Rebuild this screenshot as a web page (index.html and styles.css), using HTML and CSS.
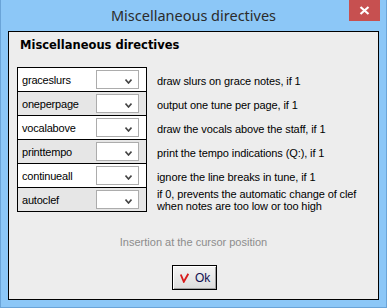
FILE: index.html
```html
<!DOCTYPE html>
<html>
<head>
<meta charset="utf-8">
<link rel="stylesheet" href="styles.css">
</head>
<body>
<div class="window">
  <div class="titlebar">
    <div class="title">Miscellaneous directives</div>
    <div class="close">
      <svg width="11" height="9" viewBox="0 0 11 9"><path d="M1.5 1 L9.5 8 M9.5 1 L1.5 8" stroke="#fff" stroke-width="2.2" fill="none"/></svg>
    </div>
  </div>
  <div class="client">
    <div class="heading">Miscellaneous directives</div>
    <div class="options">
      <div class="row">
        <div class="opt white"><span class="label">graceslurs</span><span class="combo"><svg width="7" height="5" viewBox="0 0 7 5"><path d="M0.5 0.5 L3.5 4 L6.5 0.5" stroke="#444" stroke-width="1.6" fill="none"/></svg></span></div>
        <div class="desc">draw slurs on grace notes, if 1</div>
      </div>
      <div class="row">
        <div class="opt grey"><span class="label">oneperpage</span><span class="combo"><svg width="7" height="5" viewBox="0 0 7 5"><path d="M0.5 0.5 L3.5 4 L6.5 0.5" stroke="#444" stroke-width="1.6" fill="none"/></svg></span></div>
        <div class="desc">output one tune per page, if 1</div>
      </div>
      <div class="row">
        <div class="opt white"><span class="label">vocalabove</span><span class="combo"><svg width="7" height="5" viewBox="0 0 7 5"><path d="M0.5 0.5 L3.5 4 L6.5 0.5" stroke="#444" stroke-width="1.6" fill="none"/></svg></span></div>
        <div class="desc">draw the vocals above the staff, if 1</div>
      </div>
      <div class="row">
        <div class="opt grey"><span class="label">printtempo</span><span class="combo"><svg width="7" height="5" viewBox="0 0 7 5"><path d="M0.5 0.5 L3.5 4 L6.5 0.5" stroke="#444" stroke-width="1.6" fill="none"/></svg></span></div>
        <div class="desc">print the tempo indications (Q:), if 1</div>
      </div>
      <div class="row">
        <div class="opt white"><span class="label">continueall</span><span class="combo"><svg width="7" height="5" viewBox="0 0 7 5"><path d="M0.5 0.5 L3.5 4 L6.5 0.5" stroke="#444" stroke-width="1.6" fill="none"/></svg></span></div>
        <div class="desc">ignore the line breaks in tune, if 1</div>
      </div>
      <div class="row last">
        <div class="opt grey"><span class="label">autoclef</span><span class="combo"><svg width="7" height="5" viewBox="0 0 7 5"><path d="M0.5 0.5 L3.5 4 L6.5 0.5" stroke="#444" stroke-width="1.6" fill="none"/></svg></span></div>
        <div class="desc two">if 0, prevents the automatic change of clef<br>when notes are too low or too high</div>
      </div>
    </div>
    <div class="hint">Insertion at the cursor position</div>
    <div class="actions">
      <button class="ok"><svg width="9" height="10" viewBox="0 0 9 10"><path d="M0.8 1.5 L3.8 8.8 L8.3 0.8" stroke="#d81c1c" stroke-width="1.8" fill="none"/></svg><span>Ok</span></button>
    </div>
  </div>
</div>
</body>
</html>
```

FILE: styles.css
```css
* { box-sizing: border-box; }
html, body { margin: 0; padding: 0; }
body { background: #8cc6f6; }

.window {
  width: 387px;
  height: 308px;
  background: #8cc7f7;
  border: 1px solid #6aa4d8;
  border-top: 0;
  display: flex;
  flex-direction: column;
}

.titlebar {
  height: 31px;
  display: grid;
  grid-template-columns: 1fr auto 1fr;
  align-items: start;
}
.title {
  grid-column: 2;
  font-family: "Noto Sans", sans-serif;
  font-size: 14.5px;
  line-height: 20px;
  padding-top: 5px;
  color: #2b2b2b;
  white-space: nowrap;
}
.close {
  grid-column: 3;
  justify-self: end;
  margin-right: 6px;
  width: 31px;
  height: 21px;
  background: #c75050;
  display: flex;
  align-items: center;
  justify-content: center;
}

.client {
  margin-left: 7px;
  width: 371px;
  height: 269px;
  background: #ededed;
  border: 1px solid #000;
  display: flex;
  flex-direction: column;
}

.heading {
  font-family: "DejaVu Sans", sans-serif;
  font-weight: bold;
  font-size: 11.5px;
  line-height: 14px;
  color: #000;
  margin: 6px 0 0 11px;
}

.options {
  margin: 15px 0 0 8px;
  display: flex;
  flex-direction: column;
}
.row {
  display: flex;
  align-items: stretch;
  height: 24px;
}
.row.last { height: 25px; }

.opt {
  width: 130px;
  border: 1px solid #000;
  border-bottom: 0;
  display: flex;
  align-items: center;
  padding: 0 7px 0 4px;
}
.row.last .opt { border-bottom: 1px solid #000; }
.opt.white { background: #ffffff; }
.opt.grey { background: #e6e6e6; }

.label {
  font-family: "Liberation Sans", sans-serif;
  font-size: 11px;
  letter-spacing: -0.2px;
  color: #000;
  flex: 1;
}
.combo {
  width: 43px;
  height: 19px;
  background: #fff;
  border: 1px solid #acacac;
  display: flex;
  align-items: center;
  justify-content: flex-end;
  padding: 3px 6px 0 0;
}
.combo svg { display: block; }

.desc {
  font-family: "Liberation Sans", sans-serif;
  font-size: 11px;
  letter-spacing: -0.1px;
  color: #000;
  margin-left: 10px;
  padding-top: 3px;
  display: flex;
  align-items: center;
  white-space: nowrap;
}
.desc.two {
  line-height: 12px;
  padding-top: 1px;
}

.hint {
  margin-top: 24px;
  text-align: center;
  font-family: "Liberation Sans", sans-serif;
  font-size: 11px;
  line-height: 13px;
  color: #8c8c8c;
}

.actions {
  margin-top: 16px;
  display: flex;
  justify-content: center;
  padding-left: 2px;
}
.ok {
  width: 45px;
  height: 25px;
  border: 1px solid #000;
  background: linear-gradient(#f4f4f4, #dcdcdc);
  box-shadow: inset 1px 1px 0 #fff, inset -1px -1px 0 #a0a0a0;
  padding: 0 0 0 7px;
  margin: 0;
  display: flex;
  align-items: center;
  gap: 6px;
  font-family: "Liberation Sans", sans-serif;
  font-size: 12px;
  color: #101050;
}
.ok svg { display: block; }
```
